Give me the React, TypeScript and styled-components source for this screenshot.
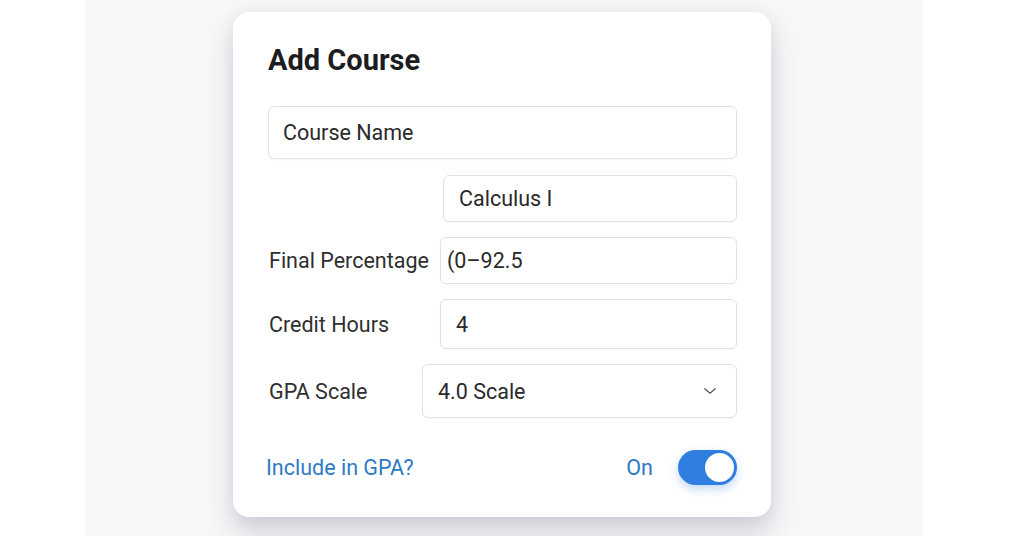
import styled, { createGlobalStyle } from "styled-components";

const GlobalStyle = createGlobalStyle`
  html, body {
    margin: 0;
    padding: 0;
    background: #ffffff;
  }
  body {
    font-family: Roboto, "Liberation Sans", Arial, sans-serif;
  }
`;

const App = () => {
  return (
    <>
      <GlobalStyle />
      <Page>
        <Panel>
          <Card>
            <Title>Add Course</Title>
            <NameField>Course Name</NameField>

            <Row $labelWidth={175} $top={16}>
              <Label />
              <Field $padLeft={15}>Calculus I</Field>
            </Row>

            <Row $labelWidth={172} $top={15}>
              <Label>Final Percentage</Label>
              <Field $padLeft={6}>(0–92.5</Field>
            </Row>

            <Row $labelWidth={172} $top={15} $height={50}>
              <Label>Credit Hours</Label>
              <Field $padLeft={15}>4</Field>
            </Row>

            <Row $labelWidth={154} $top={15} $height={54}>
              <Label>GPA Scale</Label>
              <Select>
                <span>4.0 Scale</span>
                <svg width="18" height="18" viewBox="0 0 24 24" fill="none" stroke="#555" strokeWidth="1.6" strokeLinecap="round" strokeLinejoin="round">
                  <path d="M5 9l7 6 7-6" />
                </svg>
              </Select>
            </Row>

            <Footer>
              <LinkText>Include in GPA?</LinkText>
              <ToggleGroup>
                <OnText>On</OnText>
                <Toggle>
                  <Knob />
                </Toggle>
              </ToggleGroup>
            </Footer>
          </Card>
        </Panel>
      </Page>
    </>
  );
};

export default App;

const Page = styled.div`
  width: 1024px;
  height: 536px;
  display: flex;
  padding-left: 85px;
  box-sizing: border-box;
  background: #ffffff;
  overflow: hidden;
`;

const Panel = styled.div`
  width: 837px;
  height: 100%;
  background: #f7f7f8;
  display: flex;
  padding: 12px 0 0 148px;
  box-sizing: border-box;
`;

const Card = styled.div`
  width: 538px;
  height: 505px;
  box-sizing: border-box;
  background: #ffffff;
  border-radius: 16px;
  padding: 32px 34px 0 35px;
  display: flex;
  flex-direction: column;
  box-shadow: 0 16px 26px rgba(60, 72, 100, 0.2), 0 0 14px rgba(60, 72, 100, 0.07);
`;

const Title = styled.h1`
  margin: 0 0 30px 0;
  font-size: 29px;
  font-weight: 700;
  color: #1d1d1f;
  line-height: 32px;
`;

const Row = styled.div<{ $labelWidth: number; $top: number; $height?: number }>`
  display: grid;
  grid-template-columns: ${(p) => p.$labelWidth}px 1fr;
  align-items: center;
  margin-top: ${(p) => p.$top}px;
  height: ${(p) => p.$height ?? 47}px;
`;

const Label = styled.div`
  font-size: 21.5px;
  color: #2f2f2f;
  padding-left: 1px;
`;

const Field = styled.div<{ $padLeft?: number }>`
  height: 100%;
  box-sizing: border-box;
  border: 1px solid #e2e2e4;
  border-radius: 6px;
  background: #ffffff;
  display: flex;
  align-items: center;
  padding-left: ${(p) => p.$padLeft ?? 14}px;
  font-size: 21.5px;
  color: #2a2a2a;
  box-shadow: 0 1px 2px rgba(0, 0, 0, 0.03);
`;

const NameField = styled(Field)`
  height: 53px;
`;

const Select = styled.div`
  height: 100%;
  box-sizing: border-box;
  border: 1px solid #e2e2e4;
  border-radius: 6px;
  display: flex;
  align-items: center;
  justify-content: space-between;
  padding: 0 17px 0 15px;
  font-size: 21.5px;
  color: #2a2a2a;
  box-shadow: 0 1px 2px rgba(0, 0, 0, 0.03);
`;

const Footer = styled.div`
  margin-top: 31px;
  display: flex;
  align-items: center;
  justify-content: space-between;
  height: 36px;
`;

const LinkText = styled.div`
  font-size: 21.5px;
  color: #2f7ac4;
  margin-left: -2px;
`;

const ToggleGroup = styled.div`
  display: flex;
  align-items: center;
  gap: 25px;
`;

const OnText = styled.div`
  font-size: 21.5px;
  color: #2f7ac4;
`;

const Toggle = styled.div`
  width: 59px;
  height: 35px;
  border-radius: 18px;
  background: #2f7ee0;
  display: flex;
  align-items: center;
  justify-content: flex-end;
  padding: 0 1px;
  box-sizing: border-box;
  box-shadow: 0 4px 10px rgba(47, 126, 224, 0.3);
`;

const Knob = styled.div`
  width: 33px;
  height: 33px;
  border-radius: 50%;
  background: #ffffff;
  box-sizing: border-box;
  border: 2px solid #2f7ee0;
`;
